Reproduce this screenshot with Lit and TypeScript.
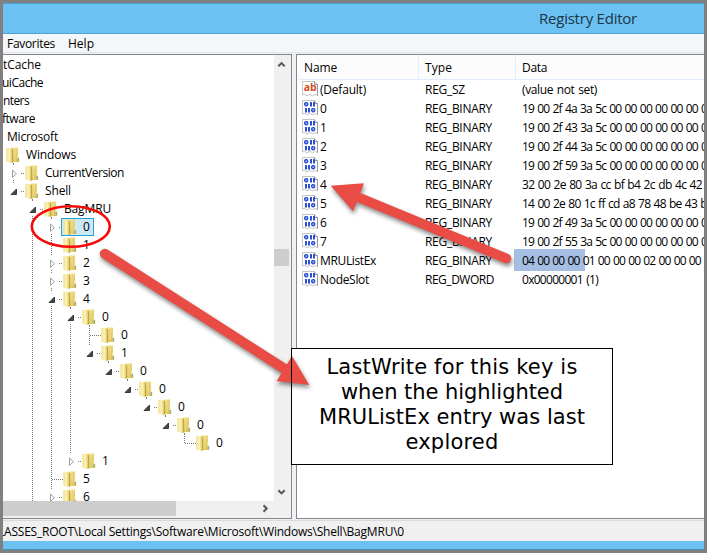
import { LitElement, html, css, svg, nothing } from "lit";
import { customElement } from "lit/decorators.js";

type Cell = "" | "v" | "t" | "l" | "o" | "O" | "c" | "C";
interface Node {
  label: string;
  w: number;
  cells: Cell[];
  open?: boolean;
  sel?: boolean;
}

/* Cell codes: v line, t tee, l corner, o/c expander (last child), O/C expander with siblings below */
const nodes: Node[] = [
  { label: "CurrentVersion", w: 78, cells: ["C"] },
  { label: "Shell", w: 25, cells: ["o"], open: true },
  { label: "BagMRU", w: 46, cells: ["", "O"], open: true },
  { label: "0", w: 6, cells: ["", "v", "C"], sel: true },
  { label: "1", w: 6, cells: ["", "v", "t"] },
  { label: "2", w: 6, cells: ["", "v", "C"] },
  { label: "3", w: 6, cells: ["", "v", "C"] },
  { label: "4", w: 6, cells: ["", "v", "O"], open: true },
  { label: "0", w: 6, cells: ["", "v", "v", "O"], open: true },
  { label: "0", w: 6, cells: ["", "v", "v", "v", "t"] },
  { label: "1", w: 6, cells: ["", "v", "v", "v", "o"], open: true },
  { label: "0", w: 6, cells: ["", "v", "v", "v", "", "o"], open: true },
  { label: "0", w: 6, cells: ["", "v", "v", "v", "", "", "o"], open: true },
  { label: "0", w: 6, cells: ["", "v", "v", "v", "", "", "", "o"], open: true },
  { label: "0", w: 6, cells: ["", "v", "v", "v", "", "", "", "", "o"], open: true },
  { label: "0", w: 6, cells: ["", "v", "v", "v", "", "", "", "", "", "l"] },
  { label: "1", w: 6, cells: ["", "v", "v", "c"] },
  { label: "5", w: 6, cells: ["", "v", "t"] },
  { label: "6", w: 6, cells: ["", "v", "C"] },
];

const values: [string, number, string, number, string, number][] = [
  ["(Default)", 45, "REG_SZ", 39, "(value not set)", 74],
  ["0", 6, "REG_BINARY", 66, "19 00 2f 4a 3a 5c 00 00 00 00 00 00 00", 190],
  ["1", 6, "REG_BINARY", 66, "19 00 2f 43 3a 5c 00 00 00 00 00 00 00", 190],
  ["2", 6, "REG_BINARY", 66, "19 00 2f 44 3a 5c 00 00 00 00 00 00 00", 190],
  ["3", 6, "REG_BINARY", 66, "19 00 2f 59 3a 5c 00 00 00 00 00 00 00", 190],
  ["4", 6, "REG_BINARY", 66, "32 00 2e 80 3a cc bf b4 2c db 4c 42", 179],
  ["5", 6, "REG_BINARY", 66, "14 00 2e 80 1c ff cd a8 78 48 be 43 b4", 190],
  ["6", 6, "REG_BINARY", 66, "19 00 2f 49 3a 5c 00 00 00 00 00 00 00", 190],
  ["7", 6, "REG_BINARY", 66, "19 00 2f 55 3a 5c 00 00 00 00 00 00 00", 190],
  ["MRUListEx", 55, "REG_BINARY", 66, "04 00 00 00 01 00 00 00 02 00 00 00 00", 193],
  ["NodeSlot", 48, "REG_DWORD", 68, "0x00000001 (1)", 75],
];

const fit = (s: string, w: number) => html`<span class="fit" data-w=${w}>${s}</span>`;

const folder = html`<svg class="folder" width="14" height="16" viewBox="0 0 14 16">
  <defs>
    <linearGradient id="a" x1="0" x2="1" y1="0" y2="0">
      <stop offset="0" stop-color="#f3e08a" /><stop offset=".5" stop-color="#faf2b8" /><stop offset="1" stop-color="#d6bc58" />
    </linearGradient>
    <linearGradient id="b" x1="0" x2="1" y1="0" y2="1">
      <stop offset="0" stop-color="#f6ea9c" /><stop offset="1" stop-color="#d9b742" />
    </linearGradient>
  </defs>
  <path d="M5 .5H12V10L13.2 11V15H5Z" fill="url(#b)" />
  <path d="M.3 1H5.2L6.8 2V15.6L5 16L.3 14.5Z" fill="url(#a)" />
  <path d="M6.6 2V15.6" stroke="#c0a23c" stroke-width="1" />
  <path d="M9 2V14.6" stroke="#ecd987" stroke-width="1" />
  <path d="M12 7V11" stroke="#fbf3c4" stroke-width="1" />
  <path d="M12.4 11V14" stroke="#6fb4cf" stroke-width="1" />
</svg>`;

const cell = (c: Cell) => {
  const dots = (d: string) => svg`<path d=${d} stroke="#777" stroke-dasharray="1 1" fill="none" />`;
  const exp = c !== "" && "oOcC".includes(c);
  return html`<svg class="cell" width="19" height="18">
    ${c === "v" || c === "t" ? dots("M9.5 0V18") : nothing}
    ${c === "l" ? dots("M9.5 0V9") : nothing}
    ${c === "t" || c === "l" ? dots("M10 9.5H21") : nothing}
    ${exp ? dots("M9.5 0V2") : nothing}
    ${exp ? dots("M17 9.5H21") : nothing}
    ${c === "O" || c === "C" ? dots("M9.5 16V18") : nothing}
    ${c === "o" || c === "O" ? svg`<path d="M12.5 7V12.5H7Z" fill="#484848" stroke="#222" stroke-width=".8" />` : nothing}
    ${c === "c" || c === "C" ? svg`<path d="M8.5 6V13.4L12.4 9.7Z" fill="#fff" stroke="#a0a0a0" />` : nothing}
  </svg>`;
};

const page = svg`<path d="M.5 .5H12.5L15.5 3.5V14.5L13 13.5L10.5 14.8L8 13.4L5 14.8L2.5 13.4L.5 14Z" fill="#fff" stroke="#c4c4c4" />
  <path d="M12.5 .5V3.5H15.5V14.5" fill="none" stroke="#999" />`;

const stringIcon = html`<svg class="reg" width="16" height="16">${page}
  <text x="1.8" y="10" class="ab">ab</text></svg>`;

const binaryIcon = html`<svg class="reg" width="16" height="16">${page}
  <g fill="none" stroke="#2b50d4" stroke-width="1.6">
    <rect x="2.8" y="2.8" width="2.8" height="2.8" rx="1" />
    <path d="M9 2V6.4M12 2V6.4M4 8V12.4M7 8V12.4" stroke-width="2" />
    <rect x="9.8" y="8.8" width="2.8" height="2.8" rx="1" />
  </g></svg>`;

@customElement("app-root")
export class AppRoot extends LitElement {
  static styles = css`
    :host {
      display: block;
      position: relative;
      width: 707px;
      height: 553px;
      overflow: hidden;
      box-sizing: border-box;
      background: #808080;
      padding: 3px;
      font: 12px/18px "Open Sans", "Noto Sans", sans-serif;
      color: #000;
    }
    .fit { display: inline-block; white-space: pre; flex: none; }
    .win {
      display: flex;
      flex-direction: column;
      width: 701px;
      height: 547px;
      box-sizing: border-box;
      background: #6ac1f2;
      border-top: 1px solid #4c9fce;
      border-bottom: 1px solid #4c93b8;
      overflow: hidden;
    }
    .title {
      flex: none;
      height: 29px;
      border-bottom: 1px solid #4fa4d4;
      font-size: 15px;
      line-height: 29px;
      padding-left: 536px;
      color: #1d3644;
    }
    .menu {
      flex: none;
      display: flex;
      gap: 13px;
      height: 18px;
      padding-left: 4px;
      line-height: 20px;
      background: #f5f6f7;
      border-bottom: 1px solid #e4e5e8;
    }
    .body { display: flex; flex: none; height: 467px; background: #f0f0f0; }
    .left {
      display: grid;
      grid-template-columns: 271px 16px;
      grid-template-rows: 446px 17px;
      width: 288px;
      border-top: 1px solid #828790;
      border-right: 1px solid #828790;
      border-bottom: 1px solid #828790;
      background: #f0f0f0;
      height: 463px;
      margin-top: 1px;
      margin-right: 4px;
      flex: none;
    }
    .tree { overflow: hidden; background: #fff; padding-top: 1px; box-sizing: border-box; }
    .row { display: flex; height: 18px; }
    .cut { height: 18px; }
    .c2, .c4 { margin-left: -1px; }
    .c5 { margin-left: 4px; }
    .cell { flex: none; display: block; overflow: visible; }
    .cells { display: flex; margin-left: 1px; }
    .folder { flex: none; display: block; margin: 1px 0 0 2px; }
    .item { display: flex; height: 18px; position: relative; }
    .item .fit { margin-left: 6px; }
    .sel { background: #cbe8f6; box-shadow: inset 0 0 0 1px #26a0da; width: 33px; height: 18px; }
    .stub::after {
      content: "";
      position: absolute;
      left: 9px;
      top: 17px;
      width: 1px;
      height: 1px;
      background: #777;
      z-index: 1;
    }
    .vbar { display: flex; flex-direction: column; background: #f0f0f0; }
    .vbar svg, .hbar svg { display: block; }
    .vthumb { width: 15px; height: 17px; background: #cdcdcd; }
    .above { height: 194px; }
    .below { height: 235px; display: flex; align-items: flex-end; }
    .hbar { display: flex; justify-content: space-between; }
    .hthumb { width: 173px; height: 15px; background: #cdcdcd; }
    .right {
      flex: none;
      width: 409px;
      height: 463px;
      margin-top: 1px;
      border: 1px solid #828790;
      border-right: 0;
      background: #fff;
      overflow: hidden;
    }
    .head, .val { display: grid; grid-template-columns: 121px 97px 200px; }
    .head { height: 24px; margin-left: 1px; border-bottom: 1px solid #e1edfa; line-height: 26px; background: #fcfcfc; }
    .head > div { padding-left: 6px; border-right: 1px solid #e1edfa; box-sizing: border-box; height: 24px; }
    .val { height: 19px; margin-left: 1px; line-height: 20px; }
    .val > div { padding-left: 6px; height: 19px; }
    .val .name { display: flex; padding-left: 4px; gap: 2px; }
    .val .data { word-spacing: 0.9px; }
    .reg { display: block; margin-top: 1px; flex: none; }
    .ab { font: bold 10.5px/10px "Open Sans", sans-serif; fill: #d34c22; letter-spacing: -0.2px; }
    .val .mark { background: linear-gradient(90deg, #a5bee3 71px, transparent 71px); margin-left: -2px; padding-left: 8px; height: 22px; margin-top: -2px; line-height: 24px; }
    .status {
      flex: none;
      height: 20px;
      line-height: 22px;
      border-top: 1px solid #dadada;
      background: #f0f0f0;
      overflow: hidden;
    }
    .status .fit { margin-left: -5px; }
    .note {
      position: absolute;
      left: 291px;
      top: 348px;
      width: 322px;
      height: 117px;
      box-sizing: border-box;
      background: #fff;
      padding-top: 7px;
      text-align: center;
      font: 21px/25px "DejaVu Sans", sans-serif;
    }
    .note div { height: 25px; }
    .over { position: absolute; left: 0; top: 0; }
    .shadow { filter: drop-shadow(1px 3px 2px rgba(0, 0, 0, 0.45)); }
  `;

  firstUpdated() {
    this.renderRoot.querySelectorAll<HTMLElement>(".fit").forEach((el) => {
      const want = Number(el.dataset.w);
      const n = (el.textContent ?? "").length;
      const got = el.getBoundingClientRect().width;
      if (n > 1) el.style.letterSpacing = `${(want + 1 - got) / n}px`;
    });
  }

  render() {
    return html`
      <div class="win">
        <div class="title">${fit("Registry Editor", 97)}</div>
        <div class="menu">${fit("Favorites", 47)}${fit("Help", 25)}</div>
        <div class="body">
          <div class="left">
            <div class="tree">
              <div class="cut c1">${fit("tCache", 37)}</div>
              <div class="cut c2">${fit("uiCache", 40)}</div>
              <div class="cut c3">${fit("nters", 25)}</div>
              <div class="cut c4">${fit("ftware", 32)}</div>
              <div class="cut c5">${fit("Microsoft", 50)}</div>
              <div class="row">
                <div class="cells"></div>
                <div class="item stub">${folder}${fit("Windows", 49)}</div>
              </div>
              ${nodes.map(
                (n) => html`<div class="row">
                  <div class="cells">${n.cells.map(cell)}</div>
                  <div class="item ${n.sel ? "sel" : ""} ${n.open ? "stub" : ""}">${folder}${fit(n.label, n.w)}</div>
                </div>`
              )}
            </div>
            <div class="vbar">
              <div class="above"><svg width="16" height="17"><path d="M4.3 11.3L7.5 8.1L10.7 11.3" fill="none" stroke="#555" stroke-width="2" /></svg></div>
              <div class="vthumb"></div>
              <div class="below"><svg width="16" height="17"><path d="M4.3 6.2L7.5 9.4L10.7 6.2" fill="none" stroke="#555" stroke-width="2" /></svg></div>
            </div>
            <div class="hbar">
              <div class="hthumb"></div>
              <svg width="16" height="17"><path d="M5.5 4.3L8.7 7.5L5.5 10.7" fill="none" stroke="#555" stroke-width="2" /></svg>
            </div>
          </div>
          <div class="right">
            <div class="head"><div>${fit("Name", 32)}</div><div>${fit("Type", 26)}</div><div>${fit("Data", 24)}</div></div>
            ${values.map(
              (v, i) => html`<div class="val">
                <div class="name">${i === 0 ? stringIcon : binaryIcon}${fit(v[0], v[1])}</div>
                <div>${fit(v[2], v[3])}</div>
                <div class="data ${i === 9 ? "mark" : ""}">${fit(v[4], v[5])}</div>
              </div>`
            )}
          </div>
        </div>
        <div class="status">${fit("LASSES_ROOT\\Local Settings\\Software\\Microsoft\\Windows\\Shell\\BagMRU\\0", 405)}</div>
      </div>
      <div class="note">
        <div>${fit("LastWrite for this key is", 250)}</div>
        <div>${fit("when the highlighted", 221)}</div>
        <div>${fit("MRUListEx entry was last", 265)}</div>
        <div>${fit("explored", 92)}</div>
      </div>
      <svg class="over" width="707" height="553">
        <ellipse cx="70.8" cy="226.5" rx="39" ry="20.3" fill="none" stroke="#f80808" stroke-width="2.6" />
        <g class="shadow" fill="#e94b45" stroke="#e94b45">
          <path d="M104.8 253.8L286 369.8" stroke-width="10" stroke-linecap="round" />
          <path d="M309.3 385L292 356L276.7 381Z" stroke="none" />
        </g>
        <g class="shadow" fill="#e94b45" stroke="#e94b45">
          <path d="M506.5 258.5L360 198" stroke-width="9.6" stroke-linecap="round" />
          <path d="M330.7 185.7L364 183.3L353 211.3Z" stroke="none" />
        </g>
        <rect x="291.5" y="348.5" width="321" height="116" fill="none" stroke="#000" />
      </svg>
    `;
  }
}
